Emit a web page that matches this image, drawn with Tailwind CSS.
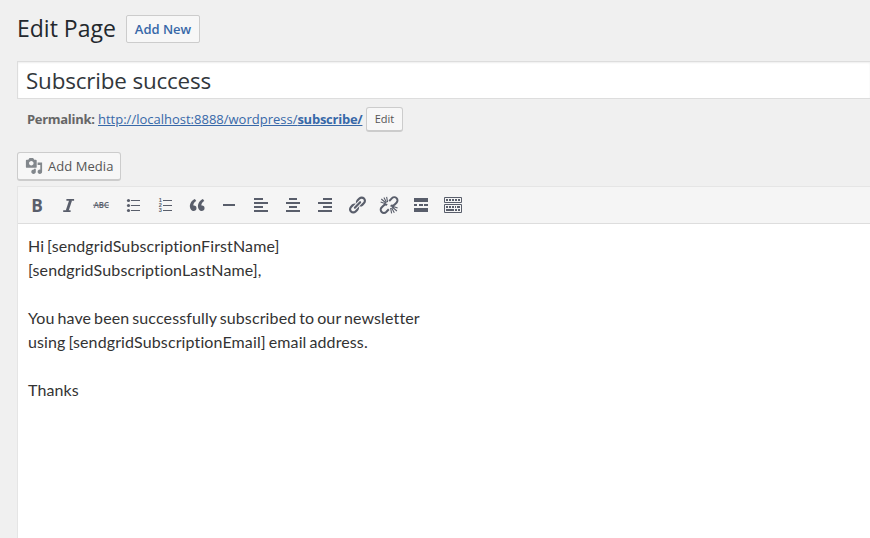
<!DOCTYPE html>
<html lang="en">
<head>
<meta charset="utf-8">
<title>Edit Page</title>
<script src="https://cdn.jsdelivr.net/npm/@tailwindcss/browser@4"></script>
</head>
<body class="h-[538px] w-[870px] overflow-hidden bg-[#f0f0f0] font-['Open_Sans',sans-serif]">
<main class="flex h-[538px] flex-col pl-[17px]">
  <header class="mt-[15px] flex h-7 shrink-0 items-center">
    <h1 class="w-[109px] pb-[2px] text-[23px] leading-[26px] whitespace-nowrap text-[#23282d]">Edit Page</h1>
    <a class="flex h-7 w-[74px] items-center justify-center rounded-[2px] border border-[#ccc] bg-[#f7f7f7] pt-[2px] text-[13px] font-semibold whitespace-nowrap text-[#3768a8]">Add New</a>
  </header>
  <div class="mt-[18px] flex h-[38px] shrink-0 items-center border border-r-0 border-[#ddd] bg-white pt-[2px] pl-2 text-[22.4px] tracking-[-0.16px] text-[#32373c] shadow-[inset_0_1px_2px_rgba(0,0,0,0.07)]"><span>Subscribe success</span></div>
  <div class="mt-2 flex h-[25px] shrink-0 items-center pl-[10px] text-[13px] whitespace-nowrap text-[#666]">
    <strong class="w-[71px] font-bold tracking-[-0.3px]">Permalink:</strong>
    <a class="w-[268px] text-[#3768a8] underline">http://localhost:8888/wordpress/<b class="tracking-[-0.25px]">subscribe/</b></a>
    <button class="flex h-[25px] w-[37px] items-center justify-center rounded-[3px] border border-b-2 border-[#ccc] bg-[#f7f7f7] text-[11px] text-[#555]">Edit</button>
  </div>
  <button class="mt-5 flex h-[29px] w-[104px] shrink-0 items-center rounded-[3px] border border-b-2 border-[#ccc] bg-[#f7f7f7] pl-[7px] text-[13px] whitespace-nowrap text-[#555]">
    <svg class="mr-[5px] size-[18px] shrink-0" viewBox="0 0 20 20" fill="#82878c"><path d="M13 11V4c0-.55-.45-1-1-1h-1.67L9 1H5L3.67 3H2c-.55 0-1 .45-1 1v7c0 .55.45 1 1 1h10c.55 0 1-.45 1-1zM7 4.5c1.38 0 2.5 1.12 2.5 2.5S8.38 9.5 7 9.5 4.5 8.38 4.5 7 5.62 4.5 7 4.5zM14 6h5v10.5c0 1.38-1.12 2.5-2.5 2.5S14 17.88 14 16.5s1.12-2.5 2.5-2.5c.17 0 .34.02.5.05V9h-3V6zm-4 8.05V13h2v3.5c0 1.38-1.12 2.5-2.5 2.5S7 17.88 7 16.5 8.12 14 9.5 14c.17 0 .34.02.5.05z"/></svg>
    <span class="pt-[2px] tracking-[0.06px]">Add Media</span>
  </button>
  <section class="mt-[5px] flex grow flex-col border-t border-l border-[#e5e5e5] bg-white">
    <div class="flex h-[37px] shrink-0 items-center gap-3 border-b border-[#ddd] bg-[#f5f5f5] pl-[9px] text-[#595e6b]">
      <svg class="size-5 overflow-visible" viewBox="0 0 20 20" fill="currentColor"><text x="4.2" y="17" font-family="Open Sans" font-weight="700" font-size="18" textLength="11.6" lengthAdjust="spacingAndGlyphs">B</text></svg>
      <svg class="size-5" viewBox="0 0 20 20" fill="none" stroke="currentColor" stroke-width="1.8"><path d="M7.4 4.9h7.7M4.2 16.1h7.4"/><path stroke-width="2.8" d="M11.7 5 8.1 16"/></svg>
      <svg class="size-5" viewBox="0 0 20 20" fill="currentColor"><text x="2.8" y="13" font-family="Open Sans" font-weight="600" font-size="8" textLength="15" lengthAdjust="spacingAndGlyphs">ABC</text><path d="M2 9.7h16v.9H2z"/></svg>
      <svg class="size-5" viewBox="0 0 20 20" fill="currentColor"><circle cx="5.5" cy="5.5" r="1.6"/><circle cx="5.5" cy="10.5" r="1.6"/><circle cx="5.5" cy="15.5" r="1.6"/><path d="M8 5h9v1H8zM8 10h9v1H8zM8 15h9v1H8z"/></svg>
      <svg class="size-5" viewBox="0 0 20 20" fill="currentColor"><g font-family="Liberation Sans" font-size="5.6" font-weight="700"><text x="3.8" y="7">1</text><text x="3.8" y="12.2">2</text><text x="3.8" y="17.4">3</text></g><path d="M8 5h9v1H8zM8 10h9v1H8zM8 15h9v1H8z"/></svg>
      <svg class="size-5" viewBox="0 0 20 20" fill="currentColor"><path d="M9.49 13.22c0-.74-.2-1.38-.61-1.9-.62-.78-1.83-.88-2.53-.72-.29-1.65 1.11-3.75 2.92-4.65L7.88 4c-2.73 1.3-5.42 4.28-4.96 8.05C3.21 14.43 4.59 16 6.54 16c.85 0 1.56-.25 2.12-.75s.83-1.18.83-2.03zm8.05 0c0-.74-.2-1.38-.61-1.9-.63-.78-1.83-.88-2.53-.72-.29-1.65 1.11-3.75 2.92-4.65L15.93 4c-2.73 1.3-5.41 4.28-4.95 8.05.29 2.38 1.66 3.95 3.61 3.95.85 0 1.56-.25 2.12-.75s.83-1.18.83-2.03z"/></svg>
      <svg class="size-5" viewBox="0 0 20 20" fill="currentColor"><path d="M4 9h12v2H4z"/></svg>
      <svg class="size-5" viewBox="0 0 20 20" fill="currentColor"><path d="M3 3h9v2H3zM3 7h14v2H3zM3 11h9v2H3zM3 15h14v2H3z"/></svg>
      <svg class="size-5" viewBox="0 0 20 20" fill="currentColor"><path d="M6 3h8v2H6zM3 7h14v2H3zM6 11h8v2H6zM3 15h14v2H3z"/></svg>
      <svg class="size-5" viewBox="0 0 20 20" fill="currentColor"><path d="M8 3h9v2H8zM3 7h14v2H3zM8 11h9v2H8zM3 15h14v2H3z"/></svg>
      <svg class="size-5" viewBox="0 0 20 20" fill="currentColor"><path d="M17.74 2.76c1.68 1.69 1.68 4.41 0 6.1l-1.53 1.52c-1.12 1.12-2.7 1.47-4.14 1.09l2.62-2.61.76-.77.76-.76c.84-.84.84-2.2 0-3.04-.84-.85-2.2-.85-3.04 0l-.77.76-3.38 3.38c-.37-1.44-.02-3.02 1.1-4.14l1.52-1.53c1.69-1.68 4.42-1.68 6.1 0zM8.59 13.43l5.34-5.34c.42-.42.42-1.1 0-1.52-.44-.43-1.13-.39-1.53 0l-5.33 5.34c-.42.42-.42 1.1 0 1.52.44.43 1.13.39 1.52 0zm-.76 2.29l4.14-4.15c.38 1.44.03 3.02-1.09 4.14l-1.52 1.53c-1.69 1.68-4.41 1.68-6.1 0-1.68-1.68-1.68-4.42 0-6.1l1.53-1.52c1.12-1.12 2.7-1.47 4.14-1.1l-4.14 4.15c-.85.84-.85 2.2 0 3.05.84.84 2.2.84 3.04 0z"/></svg>
      <svg class="size-5" viewBox="0 0 20 20" fill="none" stroke="currentColor"><path stroke-width="2" d="M10.2 6.2 13 3.1a3.2 3.2 0 0 1 4.5 4.6l-2 2a3 3 0 0 1-3.9.6M9.8 14.2 7.2 17a3.2 3.2 0 0 1-4.6-4.5l2-2a3 3 0 0 1 3.6-.6"/><path stroke-width="1.1" d="M8.6 7.2 7.6 1.8M7.6 7.4 4.9 2.4M7 8 2.3 4M6.6 8.8 1.6 7M11.6 13l1 5.4M12.6 12.8l2.7 5M13.2 12l4.7 4M13.6 11.2l5 1.8"/></svg>
      <svg class="size-5" viewBox="0 0 20 20" fill="currentColor"><path d="M3 3h14v4H3zM3 9h3v2H3zM8 9h4v2H8zM13 9h4v2h-4zM3 13h14v4H3z"/></svg>
      <svg class="size-5" viewBox="0 0 20 20" fill="currentColor"><path fill="none" stroke="currentColor" d="M1.5 2.5h17v5h-17zM1.5 9.5h17v8h-17z"/><path d="M3 4h2v2H3zM6 4h2v2H6zM9 4h2v2H9zM12 4h2v2h-2zM15 4h2v2h-2zM3 11h2v2H3zM6 11h2v2H6zM9 11h2v2H9zM12 11h1v2h-1zM14 11h3v2h-3zM3 14h8v2H3zM12 14h2v2h-2zM15 14h2v2h-2z"/></svg>
    </div>
    <div class="pt-[10px] pl-[10px] font-['Lato',sans-serif] text-base leading-6 tracking-[0.12px] whitespace-nowrap text-[#333] [font-variant-ligatures:none] [word-spacing:-1.3px]">
      <p>Hi [sendgridSubscriptionFirstName]<br>[sendgridSubscriptionLastName],</p>
      <p class="mt-6">You have been successfully subscribed to our newsletter<br>using [sendgridSubscriptionEmail] email address.</p>
      <p class="mt-6">Thanks</p>
    </div>
  </section>
</main>
</body>
</html>
